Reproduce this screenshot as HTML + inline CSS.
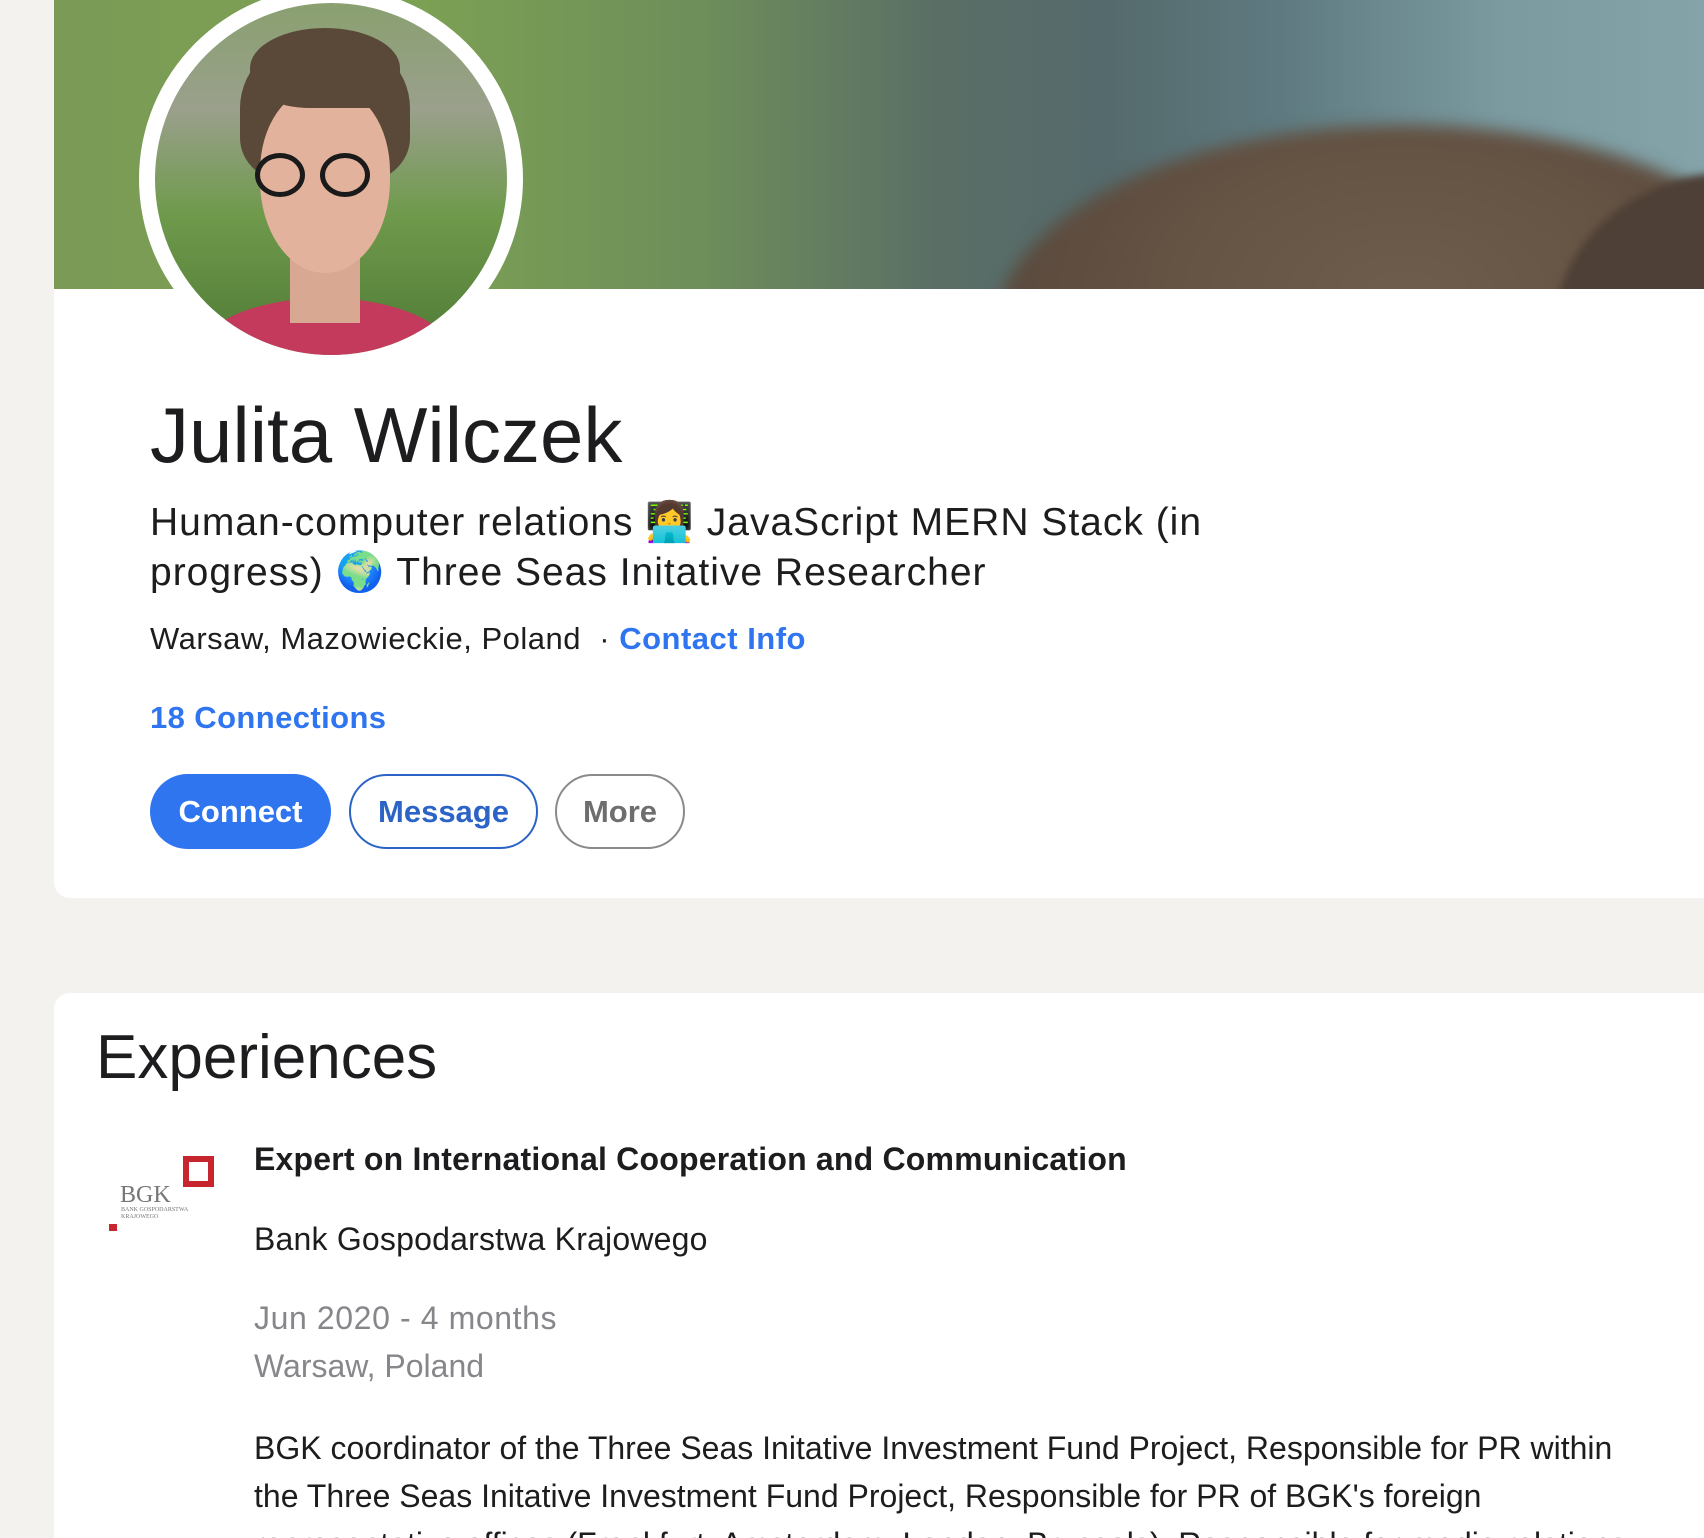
<!DOCTYPE html>
<html style="overflow:hidden;width:1704px;height:1538px"><head><meta charset="utf-8"><style>
*{margin:0;padding:0;box-sizing:border-box}
body{width:1704px;height:1538px;overflow:hidden;background:#f3f2ef;font-family:"Liberation Sans",sans-serif;color:#1d1d1f;position:relative}
.card{position:absolute;left:54px;width:1700px;background:#fff;border-radius:16px;overflow:hidden}
.banner{position:absolute;left:0;top:0;width:100%;height:289px;overflow:hidden;
background:linear-gradient(90deg,#7a9a55 0%,#7da253 20%,#6e8e5a 38%,#5a6e66 52%,#556a6c 62%,#5e7a80 72%,#7a9aa0 85%,#86a6ac 100%)}
.h1e{position:absolute;left:940px;top:125px;width:820px;height:420px;border-radius:50%;background:radial-gradient(ellipse at 50% 40%,#6e5c4c 0%,#655344 40%,#5a4a3d 70%);filter:blur(8px)}
.h2e{position:absolute;left:1500px;top:172px;width:360px;height:320px;border-radius:50%;background:#4e4036;filter:blur(4px)}
.av{position:absolute;left:85px;top:-13px;width:384px;height:384px;border-radius:50%;background:#fff}
.av .ph{position:absolute;left:16px;top:16px;width:352px;height:352px;border-radius:50%;overflow:hidden;
background:linear-gradient(180deg,#8aa070 0%,#9aa08c 30%,#6f9a4c 60%,#4f7a35 100%)}
.hair{position:absolute;left:85px;top:30px;width:170px;height:150px;border-radius:50% 50% 30% 30%;background:#5a4838}
.face{position:absolute;left:105px;top:85px;width:130px;height:185px;border-radius:45% 45% 50% 50%;background:#e2b29c}
.shirt{position:absolute;left:40px;top:295px;width:260px;height:120px;border-radius:50% 50% 0 0;background:#c43a5c}
.neck{position:absolute;left:135px;top:250px;width:70px;height:70px;background:#d8a892}
.gl{position:absolute;top:150px;width:50px;height:44px;border:5px solid #1a1a1a;border-radius:50%}
h1{position:absolute;top:390px;font-size:78px;font-weight:400;color:#1d1d1f}
.hl{position:absolute;top:498px;font-size:39px;line-height:50px;width:1120px;letter-spacing:1px;color:#1d1d1f}
.loc{position:absolute;top:621px;font-size:31px;letter-spacing:.5px;color:#1d1d1f}
.loc b{color:#2f75f0;font-weight:700}
.conn{position:absolute;top:700px;font-size:31px;font-weight:700;letter-spacing:.4px;color:#2f75f0}
.btn{position:absolute;top:774px;height:75px;border-radius:38px;font-size:31px;font-weight:700;display:flex;align-items:center;justify-content:center}
h2{position:absolute;font-size:62px;font-weight:400;color:#1d1d1f}
.t{position:absolute;font-size:32px}
</style></head><body>
<div class="card" style="top:0;height:898px;border-radius:0 0 16px 16px">
 <div class="banner"><div class="h1e"></div><div class="h2e"></div></div>
 <div class="av"><div class="ph">
  <div class="shirt"></div><div class="neck"></div><div class="hair"></div><div class="face"></div>
  <div class="gl" style="left:100px"></div><div class="gl" style="left:165px"></div>
  <div class="hair" style="left:95px;top:25px;width:150px;height:80px;border-radius:50% 50% 20% 40%"></div>
 </div></div>
 <h1 style="left:96px">Julita Wilczek</h1>
 <div class="hl" style="left:96px">Human-computer relations 👩‍💻 JavaScript MERN Stack (in progress) 🌍 Three Seas Initative Researcher</div>
 <div class="loc" style="left:96px">Warsaw, Mazowieckie, Poland &nbsp;· <b>Contact Info</b></div>
 <div class="conn" style="left:96px">18 Connections</div>
 <div class="btn" style="left:96px;width:181px;background:#2f75f0;color:#fff">Connect</div>
 <div class="btn" style="left:295px;width:189px;border:2px solid #2b63c6;color:#2b63c6">Message</div>
 <div class="btn" style="left:501px;width:130px;border:2px solid #8a8a8a;color:#6e6e6e">More</div>
</div>
<div class="card" style="top:993px;height:545px;border-radius:16px 16px 0 0">
 <h2 style="left:42px;top:29px">Experiences</h2>
 <div style="position:absolute;left:129px;top:163px;width:31px;height:31px;border:6px solid #c8262e"></div>
 <div style="position:absolute;left:66px;top:189px;font-family:'Liberation Serif',serif;font-size:24px;color:#777">BGK</div>
 <div style="position:absolute;left:67px;top:214px;font-family:'Liberation Serif',serif;font-size:6px;color:#777;line-height:7px">BANK GOSPODARSTWA<br>KRAJOWEGO</div>
 <div style="position:absolute;left:55px;top:231px;width:8px;height:7px;background:#c8262e"></div>
 <div class="t" style="left:200px;top:148px;font-weight:700;letter-spacing:.2px">Expert on International Cooperation and Communication</div>
 <div class="t" style="left:200px;top:228px;letter-spacing:.2px">Bank Gospodarstwa Krajowego</div>
 <div class="t" style="left:200px;top:307px;color:#86868b;letter-spacing:.6px">Jun 2020 - 4 months</div>
 <div class="t" style="left:200px;top:355px;color:#86868b">Warsaw, Poland</div>
 <div class="t" style="left:200px;top:431px;width:1390px;line-height:48px">BGK coordinator of the Three Seas Initative Investment Fund Project, Responsible for PR within the Three Seas Initative Investment Fund Project, Responsible for PR of BGK's foreign representative offices (Frankfurt, Amsterdam, London, Brussels), Responsible for media relations</div>
</div>
</body></html>
